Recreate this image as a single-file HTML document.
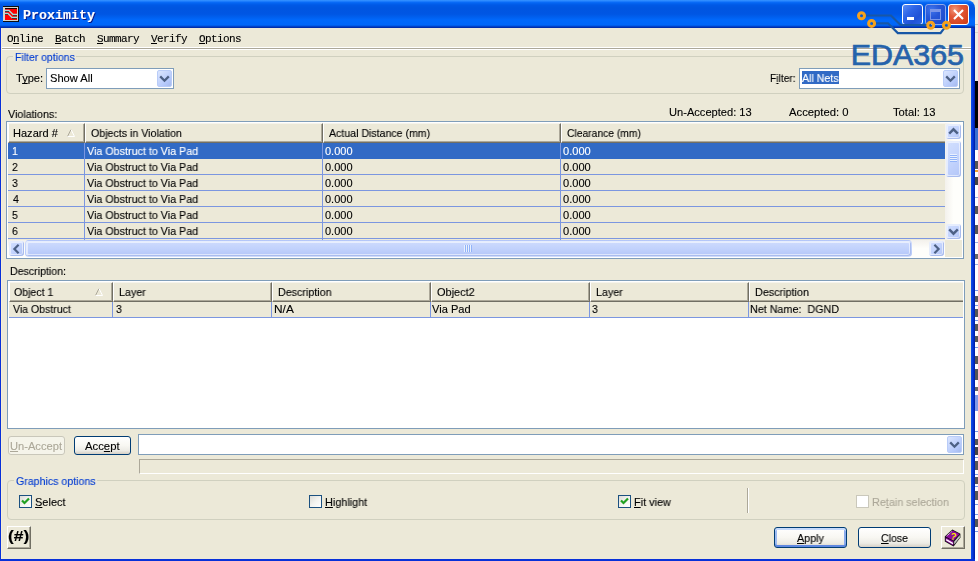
<!DOCTYPE html>
<html>
<head>
<meta charset="utf-8">
<title>Proximity</title>
<style>
html,body{margin:0;padding:0;}
body{width:978px;height:561px;overflow:hidden;background:#ece9d8;position:relative;font-family:"Liberation Sans",sans-serif;font-size:11px;color:#000;}
.abs{position:absolute;}
.t{position:absolute;white-space:nowrap;line-height:13px;font-size:11px;transform-origin:0 0;will-change:transform;-webkit-text-stroke:0.12px currentColor;}
u{text-decoration:underline;text-underline-offset:1px;text-decoration-thickness:1px;text-decoration-skip-ink:none;}
#titlebar{left:0;top:0;width:975px;height:28px;border-top-right-radius:8px;
background:linear-gradient(to bottom,#3391ff 0px,#2a88ff 1px,#0c6ef9 2px,#0465f2 3px,#0059e6 5px,#0055e0 8px,#0056e3 14px,#005fee 17px,#0068fb 20px,#0067fa 25px,#0052da 26px,#0033bb 27px,#002a9c 28px);}
#title{left:22.5px;top:8px;font-family:"Liberation Mono",monospace;font-weight:bold;font-size:13.33px;line-height:16px;color:#fff;text-shadow:1px 1px 0 #0a1883;}
.menu{font-family:"Liberation Mono",monospace;font-size:11px;line-height:12px;top:33px;letter-spacing:-0.6px;}
.grp{position:absolute;border:1px solid #d0d0bf;border-radius:4px;box-sizing:border-box;}
.gl{position:absolute;background:#ece9d8;height:3px;}
.combo{position:absolute;box-sizing:border-box;border:1px solid #7f9db9;background:#fff;}
.cbtn{position:absolute;right:1px;top:1px;width:15px;bottom:1px;border-radius:2px;background:linear-gradient(135deg,#dbe6fe 0%,#c6d6fd 40%,#b5c9fb 70%,#a5b9ec 100%);border:1px solid #b9ccf8;box-sizing:border-box;}
.list{position:absolute;box-sizing:border-box;border:1px solid #7f9db9;background:#fff;overflow:hidden;}
.hc{position:absolute;height:20px;box-sizing:border-box;background:#ece9d8;border-top:1px solid #f6f4ec;border-left:1px solid #fff;border-right:1px solid #716f64;border-bottom:1px solid #716f64;}
.hc.last:after{border-right:none !important;}
.hc:after{content:"";position:absolute;left:0;top:0;right:0;bottom:0;border-right:1px solid #aca899;border-bottom:1px solid #aca899;}
.row{position:absolute;left:1px;height:17px;background:#ece9d8;border-bottom:1px solid #7b96e0;box-sizing:border-box;}
.vl{position:absolute;width:1px;background:#7b96e0;}
.btn{position:absolute;box-sizing:border-box;border:1px solid #003c74;border-radius:3px;background:linear-gradient(to bottom,#ffffff 0%,#f8f7f2 50%,#ecebe5 80%,#d6d0c5 100%);}
.cb{position:absolute;width:13px;height:13px;box-sizing:border-box;border:1px solid #1c5180;background:linear-gradient(135deg,#dcdcd7 0%,#f3f3ef 50%,#ffffff 100%);}
.sbb{position:absolute;box-sizing:border-box;border:1px solid transparent;border-radius:4px;background:linear-gradient(135deg,#d3e0fe 0%,#c4d4fd 50%,#b2c5f7 100%) padding-box;box-shadow:inset 1px 1px 0 0 #e6edfd,inset -1px -1px 0 0 #a9bcee,inset 0 0 0 2px rgba(255,255,255,.55);}
.c3d{position:absolute;box-sizing:border-box;background:#ece9d8;border-top:1px solid #fff;border-left:1px solid #fff;border-right:1px solid #716f64;border-bottom:1px solid #716f64;}
.c3d:after{content:"";position:absolute;left:0;top:0;right:0;bottom:0;border-right:1px solid #aca899;border-bottom:1px solid #aca899;}
</style>
</head>
<body>
<!-- title bar -->
<div class="abs" id="titlebar"></div>
<div class="t" id="title">Proximity</div>
<!-- app icon -->
<svg class="abs" style="left:3px;top:6px" width="16" height="16" viewBox="0 0 16 16">
<rect x="0" y="0" width="16" height="16" fill="#101010"/>
<rect x="0" y="1" width="15" height="14" fill="#d4d4cc"/>
<rect x="2" y="2" width="12" height="12" fill="#ff0000"/>
<rect x="2" y="2" width="12" height="1" fill="#200000"/>
<rect x="2" y="5" width="4" height="1" fill="#200000"/>
<rect x="10" y="9" width="4" height="1" fill="#200000"/>
<rect x="2" y="8" width="3" height="1" fill="#200000"/>
<rect x="9" y="12" width="5" height="1" fill="#200000"/>
<path d="M2 4.5 H6 L10 8.5 H14" stroke="#a8dcd8" stroke-width="1.3" fill="none"/>
<path d="M2 7.5 H5 L9 11.5 H14" stroke="#a8dcd8" stroke-width="1.3" fill="none"/>
</svg>
<!-- caption buttons -->
<div class="abs" style="left:902px;top:4px;width:21px;height:21px;box-sizing:border-box;border:1px solid #fff;border-radius:3px;background:linear-gradient(135deg,#5b8ef5 0%,#2f66e8 35%,#2052d6 70%,#2a62e6 100%);"></div>
<div class="abs" style="left:907px;top:17px;width:7px;height:3px;background:#fff;"></div>
<div class="abs" style="left:925px;top:4px;width:21px;height:21px;box-sizing:border-box;border:1px solid #8fa9ea;border-radius:3px;background:radial-gradient(circle at 30% 25%,#3f74ec 0%,#2757d8 40%,#1d49c9 100%);"></div>
<div class="abs" style="left:930px;top:9px;width:11px;height:11px;box-sizing:border-box;border:1px solid #7b96e8;border-top:3px solid #7b96e8;"></div>
<div class="abs" style="left:948px;top:4px;width:21px;height:21px;box-sizing:border-box;border:1px solid #fff;border-radius:3px;background:radial-gradient(circle at 30% 25%,#f0987a 0%,#e2593a 35%,#cf3a12 100%);"></div>
<svg class="abs" style="left:948px;top:4px" width="21" height="21" viewBox="0 0 21 21"><path d="M6 6 L15 15 M15 6 L6 15" stroke="#fff" stroke-width="2.2" stroke-linecap="butt"/></svg>

<!-- menu -->
<div class="abs" style="left:1px;top:47px;width:970px;height:1px;background:#fff;"></div>
<div class="abs" style="left:1px;top:48px;width:970px;height:1px;background:#aca899;"></div>
<div class="abs" style="left:1px;top:49px;width:970px;height:1px;background:#fff;"></div>
<div class="t menu" style="left:7px;">O<u>n</u>line</div>
<div class="t menu" style="left:55px;"><u>B</u>atch</div>
<div class="t menu" style="left:97px;"><u>S</u>ummary</div>
<div class="t menu" style="left:151px;"><u>V</u>erify</div>
<div class="t menu" style="left:199px;"><u>O</u>ptions</div>

<!-- Filter options group -->
<div class="grp" style="left:6px;top:56px;width:958px;height:38px;"></div>
<div class="gl" style="left:13px;top:55px;width:63px;"></div>
<div class="combo" style="left:46px;top:68px;width:128px;height:21px;"><div class="cbtn"></div>
<svg class="abs" style="right:3px;top:6px" width="11" height="8" viewBox="0 0 11 8"><path d="M1.2 1.4 L5.5 5.7 L9.8 1.4" stroke="#4d6185" stroke-width="2.3" fill="none"/></svg></div>
<div class="combo" style="left:799px;top:68px;width:161px;height:21px;"><div class="cbtn"></div>
<svg class="abs" style="right:3px;top:6px" width="11" height="8" viewBox="0 0 11 8"><path d="M1.2 1.4 L5.5 5.7 L9.8 1.4" stroke="#4d6185" stroke-width="2.3" fill="none"/></svg>
<div class="abs" style="left:2px;top:2px;width:37px;height:13px;background:#316ac5;"></div></div>

<!-- Violations list -->
<div class="list" style="left:6px;top:121px;width:958px;height:138px;"></div>
<div class="hc" style="left:8px;top:123px;width:77px;"></div>
<div class="hc" style="left:85px;top:123px;width:238px;"></div>
<div class="hc" style="left:323px;top:123px;width:238px;"></div>
<div class="hc last" style="left:561px;top:123px;width:384px;border-right:none;"></div>
<div class="abs" style="left:8px;top:143px;width:937px;height:16px;background:#316ac5;"></div>
<div class="abs" style="left:8px;top:159px;width:937px;height:15px;background:#ece9d8;"></div>
<div class="abs" style="left:8px;top:174px;width:937px;height:1px;background:#7b96e0;"></div>
<div class="abs" style="left:8px;top:175px;width:937px;height:15px;background:#ece9d8;"></div>
<div class="abs" style="left:8px;top:190px;width:937px;height:1px;background:#7b96e0;"></div>
<div class="abs" style="left:8px;top:191px;width:937px;height:15px;background:#ece9d8;"></div>
<div class="abs" style="left:8px;top:206px;width:937px;height:1px;background:#7b96e0;"></div>
<div class="abs" style="left:8px;top:207px;width:937px;height:15px;background:#ece9d8;"></div>
<div class="abs" style="left:8px;top:222px;width:937px;height:1px;background:#7b96e0;"></div>
<div class="abs" style="left:8px;top:223px;width:937px;height:15px;background:#ece9d8;"></div>
<div class="abs" style="left:8px;top:238px;width:937px;height:1px;background:#7b96e0;"></div>
<div class="abs" style="left:8px;top:239px;width:937px;height:1px;background:#ece9d8;"></div>
<div class="vl" style="left:84px;top:143px;height:97px;"></div>
<div class="vl" style="left:322px;top:143px;height:97px;"></div>
<div class="vl" style="left:560px;top:143px;height:97px;"></div>
<div class="abs" style="left:945px;top:123px;width:17px;height:117px;background:linear-gradient(to right,#f3f1ec,#fefefb 50%,#fefefb);"></div>
<div class="sbb" style="left:945px;top:123px;width:17px;height:17px;"></div>
<svg class="abs" style="left:948px;top:127px" width="11" height="8" viewBox="0 0 11 8"><path d="M1.2 6.6 L5.5 2.3 L9.8 6.6" stroke="#4d6185" stroke-width="2.4" fill="none"/></svg>
<div class="sbb" style="left:945px;top:140px;width:17px;height:38px;"></div>
<div class="abs" style="left:950px;top:154px;width:7px;height:8px;background:repeating-linear-gradient(to bottom,#eef4fe 0,#eef4fe 1px,#8cb0f8 1px,#8cb0f8 2px);opacity:.9"></div>
<div class="sbb" style="left:945px;top:223px;width:17px;height:17px;"></div>
<svg class="abs" style="left:948px;top:228px" width="11" height="8" viewBox="0 0 11 8"><path d="M1.2 1.4 L5.5 5.7 L9.8 1.4" stroke="#4d6185" stroke-width="2.4" fill="none"/></svg>
<div class="abs" style="left:8px;top:240px;width:937px;height:17px;background:linear-gradient(to bottom,#f3f1ec,#fefefb 50%,#fefefb);"></div>
<div class="abs" style="left:945px;top:240px;width:17px;height:17px;background:#ece9d8;"></div>
<div class="sbb" style="left:8px;top:240px;width:17px;height:17px;"></div>
<svg class="abs" style="left:12px;top:244px" width="8" height="10" viewBox="0 0 8 10"><path d="M6.6 0.8 L2.4 5 L6.6 9.2" stroke="#4d6185" stroke-width="2.2" fill="none"/></svg>
<div class="sbb" style="left:25px;top:240px;width:887px;height:17px;background:linear-gradient(to bottom,#cfdcfd 0%,#c2d2fc 50%,#b3c6f8 100%);"></div>
<div class="abs" style="left:464px;top:245px;width:8px;height:7px;background:repeating-linear-gradient(to right,#eef4fe 0,#eef4fe 1px,#8cb0f8 1px,#8cb0f8 2px);opacity:.9"></div>
<div class="sbb" style="left:928px;top:240px;width:17px;height:17px;"></div>
<svg class="abs" style="left:933px;top:244px" width="8" height="10" viewBox="0 0 8 10"><path d="M1.4 0.8 L5.6 5 L1.4 9.2" stroke="#4d6185" stroke-width="2.2" fill="none"/></svg>
<svg class="abs" style="left:66px;top:128px" width="10" height="10" viewBox="66 128 10 10"><path d="M67.5 136.5 L71 129.5" stroke="#aca899" stroke-width="1" fill="none"/><path d="M71 129.5 L74.5 136.5 L67.5 136.5" stroke="#fff" stroke-width="1" fill="none"/></svg>

<!-- Description list -->
<div class="list" style="left:7px;top:280px;width:958px;height:149px;"></div>
<div class="hc" style="left:9px;top:282px;width:104px;"></div>
<div class="hc" style="left:113px;top:282px;width:159px;"></div>
<div class="hc" style="left:272px;top:282px;width:159px;"></div>
<div class="hc" style="left:431px;top:282px;width:159px;"></div>
<div class="hc" style="left:590px;top:282px;width:159px;"></div>
<div class="hc last" style="left:749px;top:282px;width:214px;border-right:none;"></div>
<div class="abs" style="left:9px;top:302px;width:954px;height:15px;background:#ece9d8;"></div>
<div class="abs" style="left:9px;top:317px;width:954px;height:1px;background:#7b96e0;"></div>
<div class="vl" style="left:112px;top:302px;height:16px;"></div>
<div class="vl" style="left:271px;top:302px;height:16px;"></div>
<div class="vl" style="left:430px;top:302px;height:16px;"></div>
<div class="vl" style="left:589px;top:302px;height:16px;"></div>
<div class="vl" style="left:748px;top:302px;height:16px;"></div>
<svg class="abs" style="left:94px;top:287px" width="10" height="10" viewBox="66 128 10 10"><path d="M67.5 136.5 L71 129.5" stroke="#aca899" stroke-width="1" fill="none"/><path d="M71 129.5 L74.5 136.5 L67.5 136.5" stroke="#fff" stroke-width="1" fill="none"/></svg>

<!-- accept buttons -->
<div class="abs" style="left:8px;top:436px;width:57px;height:19px;box-sizing:border-box;border:1px solid #c9c7ba;border-radius:3px;background:#f5f4ea;"></div>
<div class="btn" style="left:74px;top:436px;width:57px;height:19px;"></div>
<div class="combo" style="left:138px;top:434px;width:826px;height:21px;"><div class="cbtn"></div>
<svg class="abs" style="right:3px;top:6px" width="11" height="8" viewBox="0 0 11 8"><path d="M1.2 1.4 L5.5 5.7 L9.8 1.4" stroke="#4d6185" stroke-width="2.3" fill="none"/></svg></div>
<div class="abs" style="left:139px;top:459px;width:825px;height:15px;box-sizing:border-box;border-top:1px solid #aca899;border-left:1px solid #aca899;border-right:1px solid #fff;border-bottom:1px solid #fff;"></div>

<!-- Graphics options group -->
<div class="grp" style="left:7px;top:480px;width:958px;height:40px;"></div>
<div class="gl" style="left:14px;top:479px;width:83px;"></div>
<div class="cb" style="left:19px;top:495px;"></div>
<svg class="abs" style="left:21px;top:497px" width="9" height="9" viewBox="0 0 9 9"><path d="M1 3.5 L3.5 6 L8 1.5" stroke="#21a121" stroke-width="2.2" fill="none"/></svg>
<div class="cb" style="left:309px;top:495px;"></div>
<div class="cb" style="left:618px;top:495px;"></div>
<svg class="abs" style="left:620px;top:497px" width="9" height="9" viewBox="0 0 9 9"><path d="M1 3.5 L3.5 6 L8 1.5" stroke="#21a121" stroke-width="2.2" fill="none"/></svg>
<div class="abs" style="left:747px;top:488px;width:1px;height:25px;background:#aca899;"></div>
<div class="abs" style="left:748px;top:488px;width:1px;height:25px;background:#fff;"></div>
<div class="cb" style="left:856px;top:495px;border-color:#cac8bb;background:#fff;"></div>

<!-- bottom buttons -->
<div class="c3d" style="left:7px;top:526px;width:24px;height:23px;"></div>
<div class="t" style="left:8.2px;top:527px;font-weight:bold;font-size:15px;line-height:18px;transform:scaleX(1.16);">(#)</div>
<div class="btn" style="left:774px;top:527px;width:73px;height:21px;box-shadow:inset 0 2px 0 #c6dafc,inset 0 -2px 0 #5f88e0,inset 2px 0 0 #9dbbf1,inset -2px 0 0 #8aabec;"></div>
<div class="btn" style="left:858px;top:527px;width:73px;height:21px;"></div>
<div class="c3d" style="left:941px;top:526px;width:24px;height:23px;"></div>
<svg class="abs" style="left:943px;top:528px" width="20" height="20" viewBox="943 528 20 20">
<polygon points="944.8,536.6 952.4,529.6 960.4,533.8 960.4,537.6 953.6,546.4 944.8,541.4" fill="#101010"/>
<polygon points="945.6,536.6 952.5,530.4 959.6,534 953.4,540.8" fill="#8c0a9c"/>
<polygon points="945.6,537.4 953.4,541.6 953.4,545.4 945.6,541" fill="#8c0a9c"/>
<polygon points="954.2,541.4 959.8,535 959.8,537.4 954.2,544.6" fill="#c4c4c4"/>
<path d="M946.2 539.6 L953 543.6" stroke="#fff" stroke-width="1.3"/>
<path d="M946.8 536 L952 531.3" stroke="#fff" stroke-width="1" stroke-dasharray="1 0.8"/>
<text x="950.6" y="539.6" font-family="Liberation Sans, sans-serif" font-weight="bold" font-size="9.5" fill="#f8e800" transform="rotate(12 953 536)">?</text>
</svg>

<div class="t" style="left:14.6px;top:51px;transform:scaleX(0.9504);color:#003cd2;">Filter options</div>
<div class="t" style="left:15.6px;top:72px;transform:scaleX(1.0065);">T<u>y</u>pe:</div>
<div class="t" style="left:49.5px;top:72px;transform:scaleX(1.0122);">Show All</div>
<div class="t" style="left:769.8px;top:72px;transform:scaleX(0.9300);">F<u>i</u>lter:</div>
<div class="t" style="left:802.2px;top:72px;transform:scaleX(0.9640);color:#fff;">All Nets</div>
<div class="t" style="left:8.4px;top:108px;transform:scaleX(0.9731);">Violations:</div>
<div class="t" style="left:669.4px;top:106px;transform:scaleX(1.0096);">Un-Accepted: 13</div>
<div class="t" style="left:789.4px;top:106px;transform:scaleX(1.0241);">Accepted: 0</div>
<div class="t" style="left:893.3px;top:106px;transform:scaleX(1.0204);">Total: 13</div>
<div class="t" style="left:12.5px;top:127px;transform:scaleX(1.0034);">Hazard #</div>
<div class="t" style="left:91.1px;top:127px;transform:scaleX(0.9677);">Objects in Violation</div>
<div class="t" style="left:328.7px;top:127px;transform:scaleX(0.9622);">Actual Distance (mm)</div>
<div class="t" style="left:566.9px;top:127px;transform:scaleX(0.9371);">Clearance (mm)</div>
<div class="t" style="left:11.9px;top:145px;transform:scaleX(0.9500);color:#fff;">1</div>
<div class="t" style="left:86.8px;top:145px;transform:scaleX(0.9758);color:#fff;">Via Obstruct to Via Pad</div>
<div class="t" style="left:324.9px;top:145px;transform:scaleX(0.9982);color:#fff;">0.000</div>
<div class="t" style="left:562.9px;top:145px;transform:scaleX(1.0057);color:#fff;">0.000</div>
<div class="t" style="left:12.2px;top:161px;transform:scaleX(0.9500);">2</div>
<div class="t" style="left:86.8px;top:161px;transform:scaleX(0.9758);">Via Obstruct to Via Pad</div>
<div class="t" style="left:324.9px;top:161px;transform:scaleX(0.9982);">0.000</div>
<div class="t" style="left:562.9px;top:161px;transform:scaleX(1.0057);">0.000</div>
<div class="t" style="left:12.1px;top:177px;transform:scaleX(0.9500);">3</div>
<div class="t" style="left:86.8px;top:177px;transform:scaleX(0.9758);">Via Obstruct to Via Pad</div>
<div class="t" style="left:324.9px;top:177px;transform:scaleX(0.9982);">0.000</div>
<div class="t" style="left:562.9px;top:177px;transform:scaleX(1.0057);">0.000</div>
<div class="t" style="left:12.5px;top:193px;transform:scaleX(0.9500);">4</div>
<div class="t" style="left:86.8px;top:193px;transform:scaleX(0.9758);">Via Obstruct to Via Pad</div>
<div class="t" style="left:324.9px;top:193px;transform:scaleX(0.9982);">0.000</div>
<div class="t" style="left:562.9px;top:193px;transform:scaleX(1.0057);">0.000</div>
<div class="t" style="left:12.1px;top:209px;transform:scaleX(0.9500);">5</div>
<div class="t" style="left:86.8px;top:209px;transform:scaleX(0.9758);">Via Obstruct to Via Pad</div>
<div class="t" style="left:324.9px;top:209px;transform:scaleX(0.9982);">0.000</div>
<div class="t" style="left:562.9px;top:209px;transform:scaleX(1.0057);">0.000</div>
<div class="t" style="left:12.2px;top:225px;transform:scaleX(0.9500);">6</div>
<div class="t" style="left:86.8px;top:225px;transform:scaleX(0.9758);">Via Obstruct to Via Pad</div>
<div class="t" style="left:324.9px;top:225px;transform:scaleX(0.9982);">0.000</div>
<div class="t" style="left:562.9px;top:225px;transform:scaleX(1.0057);">0.000</div>
<div class="t" style="left:10.0px;top:265px;transform:scaleX(0.9644);">Description:</div>
<div class="t" style="left:14.1px;top:286px;transform:scaleX(0.9612);">Object 1</div>
<div class="t" style="left:119.4px;top:286px;transform:scaleX(0.9744);">Layer</div>
<div class="t" style="left:277.9px;top:286px;transform:scaleX(0.9735);">Description</div>
<div class="t" style="left:437.1px;top:286px;transform:scaleX(0.9940);">Object2</div>
<div class="t" style="left:596.4px;top:286px;transform:scaleX(0.9744);">Layer</div>
<div class="t" style="left:754.7px;top:286px;transform:scaleX(0.9809);">Description</div>
<div class="t" style="left:12.8px;top:303px;transform:scaleX(0.9581);">Via Obstruct</div>
<div class="t" style="left:115.7px;top:303px;transform:scaleX(0.9500);">3</div>
<div class="t" style="left:273.5px;top:303px;transform:scaleX(1.0800);">N/A</div>
<div class="t" style="left:432.4px;top:303px;transform:scaleX(1.0071);">Via Pad</div>
<div class="t" style="left:592.3px;top:303px;transform:scaleX(0.9500);">3</div>
<div class="t" style="left:750.4px;top:303px;transform:scaleX(0.9771);">Net Name:&nbsp; DGND</div>
<div class="t" style="left:10.4px;top:440px;transform:scaleX(1.0119);color:#aca899;"><u>U</u>n-Accept</div>
<div class="t" style="left:84.8px;top:440px;transform:scaleX(1.0280);">Acc<u>e</u>pt</div>
<div class="t" style="left:15.9px;top:475px;transform:scaleX(0.9646);color:#003cd2;">Graphics options</div>
<div class="t" style="left:34.8px;top:496px;transform:scaleX(0.9969);"><u>S</u>elect</div>
<div class="t" style="left:324.5px;top:496px;transform:scaleX(0.9839);"><u>H</u>ighlight</div>
<div class="t" style="left:633.5px;top:496px;transform:scaleX(0.9879);"><u>F</u>it view</div>
<div class="t" style="left:872.0px;top:496px;transform:scaleX(0.9824);color:#aca899;">Re<u>t</u>ain selection</div>
<div class="t" style="left:796.7px;top:532px;transform:scaleX(0.9773);"><u>A</u>pply</div>
<div class="t" style="left:880.6px;top:532px;transform:scaleX(0.9575);"><u>C</u>lose</div>

<!-- EDA365 logo -->
<svg class="abs" style="left:850px;top:5px" width="128" height="65" viewBox="850 5 128 65">
<path d="M861.5 15.5 H891 L900.5 25 H931" stroke="#1857a6" stroke-width="2.2" fill="none"/>
<path d="M871.6 23.3 H888 L897.8 33.1 H940.5 L946.4 25.4" stroke="#1857a6" stroke-width="2.2" fill="none"/>
<circle cx="861.5" cy="15.7" r="3" fill="none" stroke="#f6a11c" stroke-width="3"/>
<circle cx="871.6" cy="23.4" r="3" fill="none" stroke="#f6a11c" stroke-width="3"/>
<circle cx="930.7" cy="25.3" r="3" fill="none" stroke="#f6a11c" stroke-width="3"/>
<circle cx="946.4" cy="25.3" r="3" fill="none" stroke="#f6a11c" stroke-width="3"/>
<text x="850.7" y="64.6" font-family="Liberation Sans, sans-serif" font-size="29" fill="#1659a8" stroke="#1659a8" stroke-width="0.7" opacity="0.93" textLength="113.3" lengthAdjust="spacingAndGlyphs">EDA365</text>
</svg>

<!-- window borders -->
<div class="abs" style="left:0;top:28px;width:1px;height:533px;background:#0831d9;"></div>
<div class="abs" style="left:1px;top:28px;width:1px;height:531px;background:#f8efd4;"></div>
<div class="abs" style="left:971px;top:28px;width:4px;height:533px;background:linear-gradient(to right,#0c50e8 0,#0839dc 40%,#0028c0 75%,#001c9c 100%);"></div>
<div class="abs" style="left:0;top:559px;width:975px;height:2px;background:#0831d9;"></div>
<!-- background window strip -->
<div class="abs" style="left:975px;top:0;width:3px;height:561px;background:linear-gradient(to bottom,#f0eee4 0px,#f0eee4 24px,#c8c4b4 24px,#c8c4b4 25px,#f0eee4 25px,#f0eee4 32px,#d8d4c8 32px,#d8d4c8 33px,#f0eee4 33px,#f0eee4 81px,#000 81px,#000 128px,#3c6fd0 128px,#3c6fd0 150px,#fff 150px,#fff 161px,#555 161px,#555 169px,#fff 169px,#fff 170px,#f0a030 170px,#f0a030 172px,#fff 172px,#fff 177px,#444 177px,#444 185px,#fff 185px,#fff 197px,#9aace0 197px,#9aace0 198px,#fff 198px,#fff 206px,#555 206px,#555 214px,#fff 214px,#fff 225px,#555 225px,#555 234px,#fff 234px,#fff 242px,#9aace0 242px,#9aace0 243px,#fff 243px,#fff 254px,#666 254px,#666 259px,#fff 259px,#fff 264px,#9aace0 264px,#9aace0 265px,#fff 265px,#fff 290px,#7b96e0 290px,#7b96e0 291px,#fff 291px,#fff 296px,#555 296px,#555 302px,#fff 302px,#fff 305px,#7b96e0 305px,#7b96e0 306px,#fff 306px,#fff 309px,#555 309px,#555 317px,#fff 317px,#fff 320px,#7b96e0 320px,#7b96e0 321px,#fff 321px,#fff 324px,#555 324px,#555 331px,#fff 331px,#fff 336px,#555 336px,#555 342px,#fff 342px,#fff 347px,#7b96e0 347px,#7b96e0 348px,#fff 348px,#fff 356px,#555 356px,#555 364px,#fff 364px,#fff 369px,#555 369px,#555 380px,#fff 380px,#fff 387px,#666 387px,#666 391px,#fff 391px,#fff 395px,#8098e8 395px,#8098e8 411px,#fff 411px,#fff 431px,#7b96e0 431px,#7b96e0 432px,#fff 432px,#fff 439px,#555 439px,#555 445px,#fff 445px,#fff 447px,#444 447px,#444 455px,#fff 455px,#fff 457px,#7b96e0 457px,#7b96e0 458px,#fff 458px,#fff 461px,#555 461px,#555 470px,#fff 470px,#fff 474px,#7b96e0 474px,#7b96e0 475px,#fff 475px,#fff 477px,#555 477px,#555 484px,#fff 484px,#fff 486px,#7b96e0 486px,#7b96e0 487px,#fff 487px,#fff 491px,#555 491px,#555 500px,#fff 500px,#fff 504px,#7b96e0 504px,#7b96e0 505px,#fff 505px,#fff 514px,#7b96e0 514px,#7b96e0 515px,#fff 515px,#fff 519px,#555 519px,#555 527px,#fff 527px,#fff 531px,#7b96e0 531px,#7b96e0 532px,#fff 532px,#fff 561px);"></div>
</body>
</html>
